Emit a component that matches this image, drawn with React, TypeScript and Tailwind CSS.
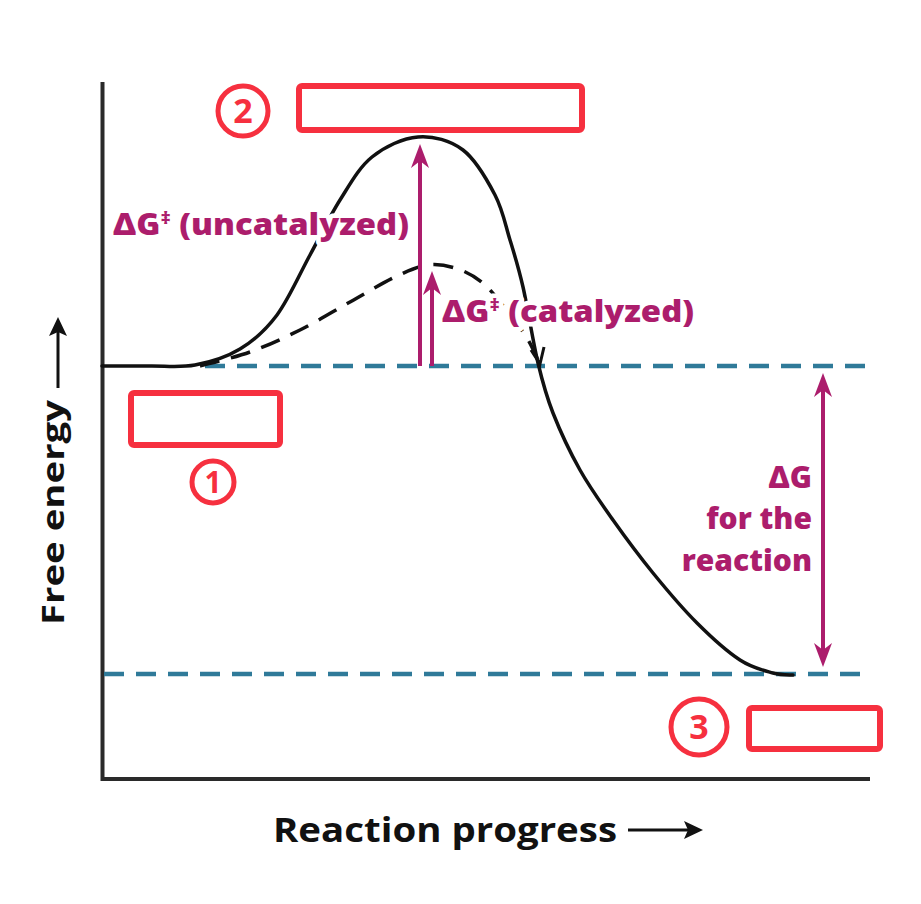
import React from "react";

type P = [number, number];

function smooth(points: P[]): string {
  let d = `M${points[0][0]},${points[0][1]}`;
  for (let i = 0; i < points.length - 1; i++) {
    const p0 = points[i - 1] || points[i];
    const p1 = points[i];
    const p2 = points[i + 1];
    const p3 = points[i + 2] || p2;
    const c1x = p1[0] + (p2[0] - p0[0]) / 6;
    const c1y = p1[1] + (p2[1] - p0[1]) / 6;
    const c2x = p2[0] - (p3[0] - p1[0]) / 6;
    const c2y = p2[1] - (p3[1] - p1[1]) / 6;
    d += ` C${c1x.toFixed(1)},${c1y.toFixed(1)} ${c2x.toFixed(1)},${c2y.toFixed(1)} ${p2[0]},${p2[1]}`;
  }
  return d;
}

const solid: P[] = [
  [102, 366], [150, 366], [195, 365], [240, 349], [277, 315], [310, 255], [340, 200],
  [372, 157], [418, 137], [463, 150], [495, 195], [510, 240], [523, 287], [538, 363],
  [553, 413], [580, 470], [613, 520], [653, 573], [697, 623], [740, 660], [773, 673], [793, 675],
];

const dashed: P[] = [
  [200, 366], [250, 352], [300, 330], [350, 302], [395, 277], [428, 265],
  [458, 269], [484, 284], [508, 312], [527, 338], [538, 360],
];

const MAG = "#ac1d6c";
const RED = "#f6303f";
const BLUE = "#2f7a99";
const FONT = "'Open Sans', 'Noto Sans', sans-serif";

function headUp(x: number, y: number) {
  return `M${x},${y} L${x + 9},${y + 24} L${x},${y + 17} L${x - 9},${y + 24} Z`;
}
function headDown(x: number, y: number) {
  return `M${x},${y} L${x + 9},${y - 24} L${x},${y - 17} L${x - 9},${y - 24} Z`;
}

export default function App() {
  return (
    <div className="w-[921px] h-[904px] bg-white">
      <svg width="921" height="904" viewBox="0 0 921 904" xmlns="http://www.w3.org/2000/svg">
        {/* axes */}
        <path d="M102.5,82 L102.5,779 L870,779" fill="none" stroke="#2a2a2a" strokeWidth="4" />

        {/* blue dashed levels */}
        <line x1="205" y1="366" x2="868" y2="366" stroke={BLUE} strokeWidth="4.5" strokeDasharray="20 12" />
        <line x1="104" y1="674" x2="868" y2="674" stroke={BLUE} strokeWidth="4.5" strokeDasharray="20 12" />

        {/* curves */}
        <path d={smooth(solid)} fill="none" stroke="#111" strokeWidth="3.5" strokeLinecap="round" />
        <path d={smooth(dashed)} fill="none" stroke="#111" strokeWidth="3.5" strokeDasharray="20 12" />
        <path d="M531,350 L540,364 L544,347" fill="none" stroke="#111" strokeWidth="3" />

        {/* texts with white halo */}
        <g fontFamily={FONT} fontWeight="800" fill={MAG} stroke="#fff" strokeWidth="9" paintOrder="stroke" strokeLinejoin="round">
          <text x="113" y="235" fontSize="30" textLength="296" lengthAdjust="spacingAndGlyphs">
            ΔG<tspan fontSize="18" dy="-11">‡</tspan><tspan dy="11"> (uncatalyzed)</tspan>
          </text>
          <text x="442" y="322" fontSize="30" textLength="252" lengthAdjust="spacingAndGlyphs">
            ΔG<tspan fontSize="18" dy="-11">‡</tspan><tspan dy="11"> (catalyzed)</tspan>
          </text>
          <text x="812" y="488" fontSize="30" textAnchor="end">ΔG</text>
          <text x="812" y="529" fontSize="30" textAnchor="end">for the</text>
          <text x="812" y="571" fontSize="30" textAnchor="end">reaction</text>
        </g>

        {/* magenta arrows */}
        <g stroke={MAG} strokeWidth="4" fill={MAG}>
          <line x1="420" y1="366" x2="420" y2="158" />
          <line x1="432" y1="366" x2="432" y2="285" />
          <line x1="823" y1="385" x2="823" y2="655" />
        </g>
        <g fill={MAG}>
          <path d={headUp(420, 144)} />
          <path d={headUp(432, 271)} />
          <path d={headUp(823, 373)} />
          <path d={headDown(823, 667)} />
        </g>

        {/* axis labels */}
        <g fontFamily={FONT} fontWeight="700" fill="#111">
          <text x="273" y="842" fontSize="34" textLength="344" lengthAdjust="spacingAndGlyphs">Reaction progress</text>
          <text
            x="0"
            y="0"
            fontSize="31"
            textLength="225"
            lengthAdjust="spacingAndGlyphs"
            transform="translate(64,625) rotate(-90)"
          >
            Free energy
          </text>
        </g>
        <line x1="628" y1="830" x2="690" y2="830" stroke="#111" strokeWidth="3" />
        <path d="M703,830 L684,821 L688,830 L684,839 Z" fill="#111" />
        <line x1="58" y1="388" x2="58" y2="330" stroke="#111" strokeWidth="3" />
        <path d="M58,317 L49,336 L58,332 L67,336 Z" fill="#111" />

        {/* red answer boxes */}
        <g fill="none" stroke={RED} strokeWidth="6">
          <rect x="299" y="86" width="283" height="44" rx="3" />
          <rect x="131" y="393" width="149" height="52" rx="3" />
          <rect x="749" y="708" width="131" height="41" rx="3" />
          <circle cx="243" cy="111" r="25" strokeWidth="5" />
          <circle cx="213" cy="482" r="21" strokeWidth="5" />
          <circle cx="699" cy="727" r="28" strokeWidth="5" />
        </g>
        <g fontFamily={FONT} fontWeight="700" fill={RED} textAnchor="middle">
          <text x="243" y="123" fontSize="34">2</text>
          <text x="213" y="493" fontSize="30">1</text>
          <text x="699" y="739" fontSize="34">3</text>
        </g>
      </svg>
    </div>
  );
}
